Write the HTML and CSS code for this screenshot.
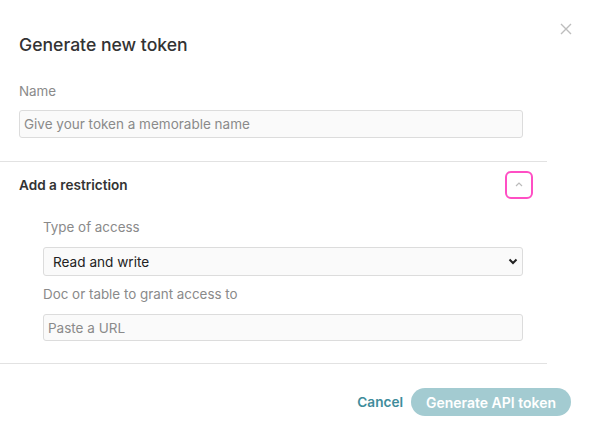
FILE: index.html
```html
<!DOCTYPE html>
<html>
<head>
<meta charset="utf-8">
<link rel="stylesheet" href="styles.css">
</head>
<body>
<div class="dialog">
  <button class="close" aria-label="Close">
    <svg width="12" height="12" viewBox="0 0 12 12"><path d="M1 1L11 11M11 1L1 11" stroke="#bdbdbd" stroke-width="1.4" fill="none"/></svg>
  </button>
  <div class="section head">
    <h1 class="title">Generate new token</h1>
    <label class="label">Name</label>
    <input class="field" type="text" placeholder="Give your token a memorable name">
  </div>
  <div class="divider"></div>
  <div class="restriction">
    <div class="row">
      <span class="row-title">Add a restriction</span>
      <button class="toggle" aria-label="Collapse">
        <svg width="8" height="5" viewBox="0 0 8 5"><path d="M1 4L4 1L7 4" stroke="#bbbbbb" stroke-width="1.2" fill="none"/></svg>
      </button>
    </div>
    <div class="sub">
      <label class="label">Type of access</label>
      <div class="select">
        <span>Read and write</span>
        <svg width="10" height="7" viewBox="0 0 10 7"><path d="M1.5 1.5L5 5L8.5 1.5" stroke="#222" stroke-width="2" fill="none"/></svg>
      </div>
      <label class="label label2">Doc or table to grant access to</label>
      <input class="field field2" type="text" placeholder="Paste a URL">
    </div>
  </div>
  <div class="divider"></div>
  <div class="footer">
    <button class="cancel">Cancel</button>
    <button class="primary">Generate API token</button>
  </div>
</div>
</body>
</html>
```

FILE: styles.css
```css
* { box-sizing: border-box; }
body {
  margin: 0;
  background: #fff;
  font-family: Inter, "Liberation Sans", sans-serif;
  color: #333;
}
.dialog {
  position: relative;
  width: 593px;
  height: 439px;
  background: #fff;
}
.close {
  position: absolute;
  top: 23px;
  right: 21px;
  width: 12px;
  height: 12px;
  padding: 0;
  border: 0;
  background: none;
  display: flex;
}
.section.head {
  padding: 35px 70px 23px 19px;
  display: flex;
  flex-direction: column;
}
.title {
  margin: 0;
  font-size: 17.6px;
  line-height: 20px;
  font-weight: 500;
  color: #333;
}
.label {
  display: block;
  font-size: 13.4px;
  line-height: 16px;
  color: #8a8a8a;
  margin-top: 28px;
}
.field {
  display: block;
  width: 504px;
  height: 28px;
  margin-top: 11px;
  border: 1px solid #dcdcdc;
  border-radius: 3px;
  background: #fafafa;
  padding: 0 5px 0 4px;
  font-family: inherit;
  font-size: 13.5px;
  color: #333;
  outline: none;
}
.field::placeholder { color: #8a8a8a; }
.divider {
  width: 547px;
  height: 1px;
  background: #e2e2e2;
}
.restriction {
  padding: 9px 14px 22px 19px;
}
.row {
  display: flex;
  align-items: center;
  justify-content: space-between;
  width: 514px;
}
.row-title {
  font-size: 13.6px;
  font-weight: 600;
  color: #333;
}
.toggle {
  width: 28px;
  height: 28px;
  border: 2px solid #ff4fc4;
  border-radius: 6px;
  background: #fff;
  display: flex;
  align-items: center;
  justify-content: center;
  padding: 0 0 2px;
}
.sub {
  padding-left: 24px;
}
.sub .label { margin-top: 20px; }
.sub .label2 { margin-top: 10px; }
.select {
  display: flex;
  align-items: center;
  justify-content: space-between;
  width: 480px;
  height: 29px;
  margin-top: 12px;
  border: 1px solid #dcdcdc;
  border-radius: 3px;
  background: #fafafa;
  padding: 0 4px 0 9px;
  font-size: 13.6px;
  color: #222;
}
.field2 { width: 480px; margin-top: 12px; height: 27px; }
.footer {
  display: flex;
  justify-content: flex-end;
  align-items: center;
  gap: 8px;
  padding: 24px 22px 0 0;
}
.cancel {
  border: 0;
  background: none;
  padding: 0;
  font-family: inherit;
  font-size: 13.6px;
  font-weight: 600;
  color: #3f8c9b;
}
.primary {
  width: 160px;
  height: 28px;
  border: 0;
  border-radius: 14px;
  background: #a3cbd1;
  color: #fff;
  font-family: inherit;
  font-size: 14px;
  font-weight: 600;
}
```
